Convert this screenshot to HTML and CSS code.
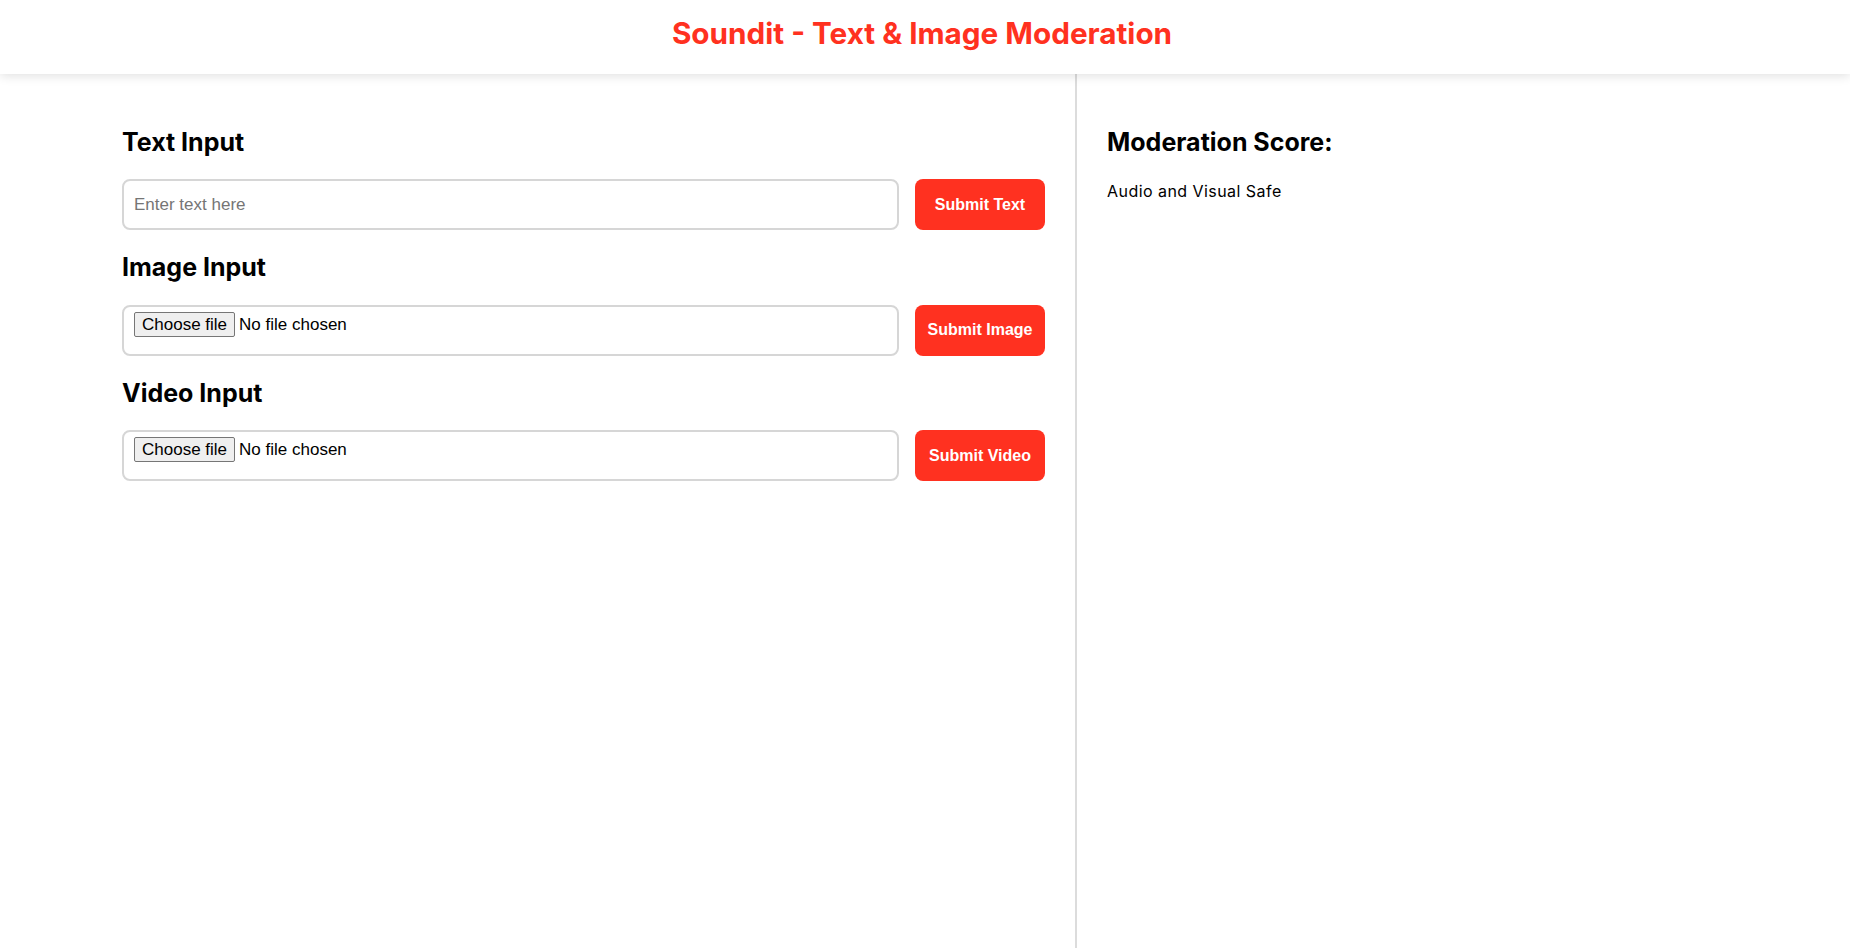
FILE: index.html
```html
<!DOCTYPE html>
<html lang="en">
<head>
<meta charset="UTF-8">
<title>Soundit - Text &amp; Image Moderation</title>
<link rel="stylesheet" href="styles.css">
</head>
<body>
<header class="topbar">
  <h1 class="title">Soundit - Text &amp; Image Moderation</h1>
</header>
<main class="layout">
  <section class="panel panel-left">
    <div class="block">
      <h2 class="heading">Text Input</h2>
      <div class="row">
        <input class="field" type="text" placeholder="Enter text here">
        <button class="btn">Submit Text</button>
      </div>
    </div>
    <div class="block">
      <h2 class="heading">Image Input</h2>
      <div class="row">
        <label class="field file-field">
          <input class="file-native" type="file" accept="image/*">
          <span class="file-btn">Choose file</span>
          <span class="file-name">No file chosen</span>
        </label>
        <button class="btn">Submit Image</button>
      </div>
    </div>
    <div class="block">
      <h2 class="heading">Video Input</h2>
      <div class="row">
        <label class="field file-field">
          <input class="file-native" type="file" accept="video/*">
          <span class="file-btn">Choose file</span>
          <span class="file-name">No file chosen</span>
        </label>
        <button class="btn">Submit Video</button>
      </div>
    </div>
  </section>
  <section class="panel panel-right">
    <h2 class="heading">Moderation Score:</h2>
    <p class="result">Audio and Visual Safe</p>
  </section>
</main>
</body>
</html>
```
FILE: styles.css
```css
* { box-sizing: border-box; }

html, body {
  margin: 0;
  padding: 0;
  height: 100%;
  background: #fff;
  font-family: Inter, "Liberation Sans", sans-serif;
  color: #000;
}

body {
  display: flex;
  flex-direction: column;
}

.topbar {
  position: relative;
  z-index: 1;
  height: 74px;
  padding: 13px 6px 0 0;
  background: #fff;
  box-shadow: 0 2px 10px rgba(0, 0, 0, 0.12);
  text-align: center;
}

.title {
  margin: 0;
  font-size: 29.7px;
  line-height: 40px;
  font-weight: 700;
  color: #ff3120;
}

.layout {
  flex: 1;
  display: flex;
}

.panel {
  padding-top: 51.5px;
}

.panel-left {
  width: 1077px;
  padding-left: 122px;
  padding-right: 30px;
  border-right: 2px solid #dcdcdc;
}

.panel-right {
  flex: 1;
  padding-left: 30px;
}

.block + .block {
  margin-top: 21px;
}

.heading {
  margin: 0 0 21.5px;
  font-size: 25px;
  line-height: 32px;
  font-weight: 700;
}

.row {
  display: flex;
  gap: 16px;
  height: 51px;
}

.field {
  flex: 1;
  min-width: 0;
  height: 100%;
  padding: 0 10px;
  border: 2px solid #d6d6d6;
  border-radius: 8px;
  font-family: "Liberation Sans", Arial, sans-serif;
  font-size: 17px;
  color: #000;
  background: #fff;
  outline: none;
}

.field::placeholder {
  color: #757575;
}

.file-field {
  display: flex;
  align-items: flex-start;
  padding: 5px 10px;
  cursor: pointer;
}

.file-native {
  display: none;
}

.file-btn {
  flex: none;
  margin-right: 4px;
  padding: 1px 7px;
  line-height: 21px;
  border: 1px solid #767676;
  border-radius: 2px;
  background: #efefef;
  color: #000;
}

.file-name {
  line-height: 25px;
  white-space: nowrap;
}

.btn {
  width: 130px;
  flex: none;
  border: none;
  border-radius: 8px;
  background: #ff3120;
  color: #fff;
  font-family: "Liberation Sans", Arial, sans-serif;
  font-size: 16px;
  font-weight: 700;
  cursor: pointer;
}

.result {
  margin: 0;
  font-size: 16px;
  line-height: 24px;
  letter-spacing: 0.45px;
}
```
